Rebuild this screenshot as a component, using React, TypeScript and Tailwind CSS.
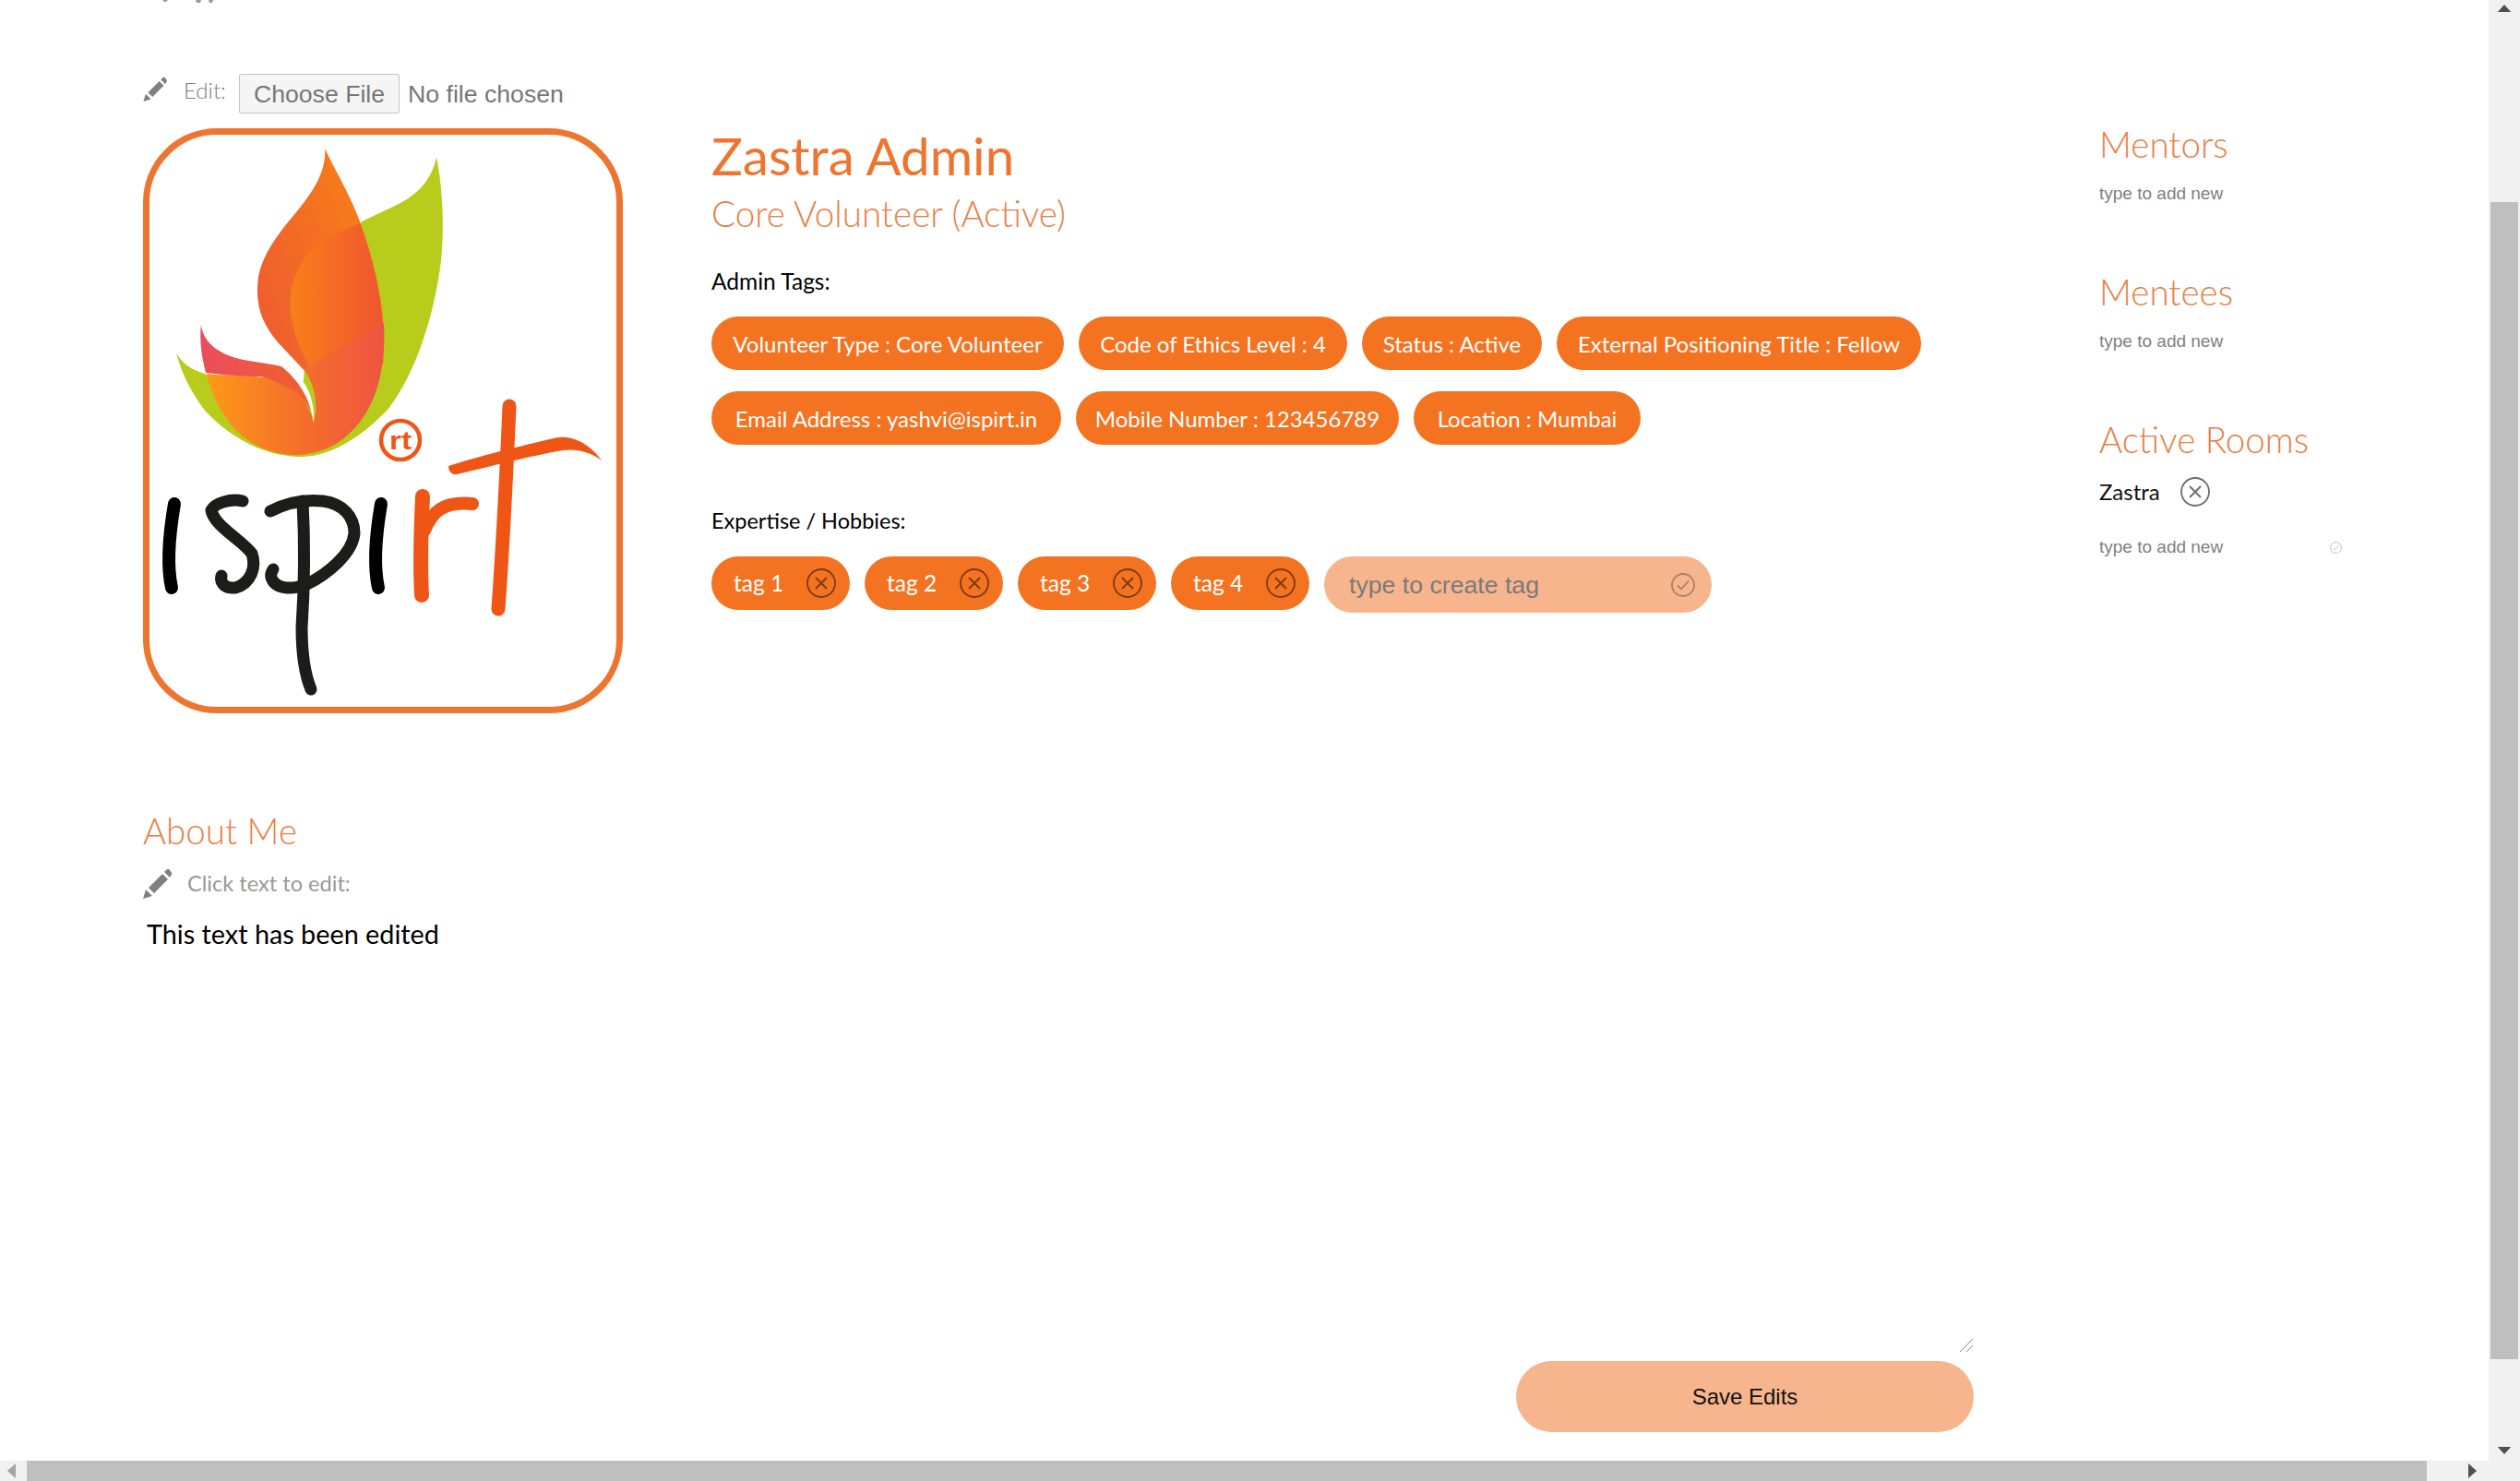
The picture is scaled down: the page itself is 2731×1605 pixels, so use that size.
const sans = "font-['Lato','Open_Sans',sans-serif]";

const adminTags = [
  [
    { label: "Volunteer Type : Core Volunteer", width: "w-[382px]" },
    { label: "Code of Ethics Level : 4", width: "w-[291px]" },
    { label: "Status : Active", width: "w-[195px]" },
    { label: "External Positioning Title : Fellow", width: "w-[395px]" },
  ],
  [
    { label: "Email Address : yashvi@ispirt.in", width: "w-[379px]" },
    { label: "Mobile Number : 123456789", width: "w-[350px]" },
    { label: "Location : Mumbai", width: "w-[246px]" },
  ],
];
const hobbyTags = ["tag 1", "tag 2", "tag 3", "tag 4"];

const PencilIcon = ({ className }: { className: string }) => (
  <svg viewBox="0 0 32 33" className={className} fill="#808080">
    <path d="M6 21 21 6l6 6-15 15Z" />
    <path d="M0 33l3-10 7 7Z" />
    <path d="M23 4l3-3q2-1 3 1l2 3q1 2-1 3l-1 2Z" />
  </svg>
);

const CircleCross = ({ className, color }: { className: string; color: string }) => (
  <svg viewBox="0 0 32 32" className={className} fill="none" stroke={color} strokeWidth="1.8">
    <circle cx="16" cy="16" r="15" />
    <path d="M10 10l12 12M22 10 10 22" />
  </svg>
);

const CircleTick = ({ className, color }: { className: string; color: string }) => (
  <svg viewBox="0 0 26 26" className={className} fill="none" stroke={color} strokeWidth="1.8">
    <circle cx="13" cy="13" r="12" />
    <path d="M7 13.5l4 4 8-9" />
  </svg>
);

const IspirtLogo = () => (
  <svg viewBox="155 139 520 634" className="h-[634px] w-[520px]">
    <defs>
      <linearGradient id="petal" x1="0" x2="0.8" y1="0.6" y2="0.1">
        <stop offset="0" stopColor="#ef5f2e" />
        <stop offset="1" stopColor="#f77e18" />
      </linearGradient>
      <linearGradient id="inner" x1="0" x2="1" y1="0" y2="0">
        <stop offset="0" stopColor="#f87f1a" />
        <stop offset="1" stopColor="#f05530" />
      </linearGradient>
      <linearGradient id="bowl" x1="0" x2="1" y1="0" y2="0">
        <stop offset="0" stopColor="#fd9a18" />
        <stop offset="0.5" stopColor="#f5702a" />
        <stop offset="1" stopColor="#ee5540" />
      </linearGradient>
      <linearGradient id="pink" x1="0" x2="1" y1="0" y2="0">
        <stop offset="0" stopColor="#ea4d5e" />
        <stop offset="1" stopColor="#f2602a" />
      </linearGradient>
    </defs>
    {/* green leaves */}
    <path d="M473 170C468 195 452 212 428 223L392 240 330 400 321 495C360 497 395 470 421 443 450 405 470 345 478 283 482 240 479 200 473 170Z" fill="#b8cc1c" />
    <path d="M191 382C196 392 205 400 222 405L340 470 321 495C285 493 250 475 222 445 205 422 196 402 191 382Z" fill="#b8cc1c" />
    {/* main flame */}
    <path d="M352 161C354 185 340 207 321 230 300 255 285 275 280 300 276 330 283 350 302 372L333 405 416 380C418 340 409 295 392 245 380 212 365 188 352 161Z" fill="url(#petal)" />
    <path d="M390 242C370 252 345 258 330 280 316 300 312 325 316 345 320 370 330 385 340 410L415 395C418 340 408 290 390 242Z" fill="url(#inner)" />
    <path d="M224 405C250 408 285 405 310 415 325 422 335 440 340 458 345 440 342 420 330 400L416 350C418 395 410 425 397 447 380 475 355 492 321 493 290 493 265 478 250 460 237 443 228 425 224 405Z" fill="url(#bowl)" />
    {/* pink petal */}
    <path d="M218 352C220 370 235 382 256 388 275 393 290 393 308 398 325 405 338 425 337 445 330 430 315 418 283 408 260 408 240 406 223 404 218 385 216 368 218 352Z" fill="url(#pink)" />
    <path d="M300 393C325 400 342 425 340 458 336 432 325 412 300 393Z" fill="#ffffff" />
    {/* wordmark strokes */}
    <g fill="none" stroke="#000000" strokeLinecap="round" strokeWidth="14">
      <path d="M189 546C184 575 180 610 186 637" />
      <path d="M413 546C408 575 404 610 410 637" />
    </g>
    <g fill="none" stroke="#1d1c1b" strokeLinecap="round" strokeLinejoin="round" strokeWidth="13">
      <path d="M263 543C250 540 233 545 229 553 232 570 262 585 273 600 278 615 272 632 255 637 244 638 238 632 240 624" />
      <path d="M293 554C310 545 330 541 350 543 372 546 384 560 384 578 382 600 355 622 333 633 315 640 298 638 294 626 293 622 294 620 296 617" />
      <path d="M328 543C331 600 329 650 327 680 327 705 330 730 337 747" />
    </g>
    <g fill="none" stroke="#ef5615" strokeLinecap="round" strokeLinejoin="round">
      <path d="M458 538C456 580 455 610 457 645" strokeWidth="16" />
      <path d="M460 575C468 555 480 543 512 546" strokeWidth="14" />
      <path d="M552 440C549 510 545 590 540 660" strokeWidth="15" />
    </g>
    <path d="M486 505C520 494 570 482 600 475 620 470 640 482 652 499 640 490 625 486 610 488 570 495 530 506 495 514 490 515 486 511 486 505Z" fill="#ef5615" />
    <circle cx="434" cy="477" r="21" fill="none" stroke="#ef5615" strokeWidth="4.5" />
    <text x="434" y="487" textAnchor="middle" fontFamily="'Liberation Sans',sans-serif" fontWeight="700" fontSize="27" fill="#ef5615" textLength="24" lengthAdjust="spacingAndGlyphs">rt</text>
  </svg>
);

const SideSection = ({ title }: { title: string }) => (
  <section className="mb-[70px]">
    <h3 className="text-[38.5px] leading-[48px] font-light text-[#e97e45]">{title}</h3>
    <p className="mt-[18px] text-[19px] leading-[24px] text-[#808080] font-['Liberation_Sans',sans-serif]">type to add new</p>
  </section>
);

export default function App() {
  return (
    <div className={`relative flex h-[1605px] w-[2731px] flex-col overflow-hidden bg-white ${sans}`}>
      {/* bottoms of a line cut off by the scroll position */}
      <svg viewBox="0 0 60 3" className="absolute left-[176px] top-0 h-[3px] w-[60px]" fill="#9a9a9a">
        <path d="M0 0h6l-2 2H2ZM36 0h6l-1 3h-4ZM50 0h5l-1 3h-3Z" />
      </svg>
      <div className="flex min-h-0 flex-1">
        <main className="relative flex min-w-0 flex-1 flex-col pb-[31px] pl-[155px] pt-[80px]">
          <div className="flex">
            <div className="w-[616px]">
              <div className="flex h-[43px] items-center">
                <PencilIcon className="h-[27px] w-[27px] -translate-y-[5px]" />
                <span className="ml-[17px] w-[44px] -translate-y-[4px] whitespace-nowrap text-[24px] font-light text-[#808080]">Edit:</span>
                <button className="ml-[16px] h-[43px] w-[174px] rounded-[2px] border border-[#c4c4c4] bg-[#f5f5f5] text-[26.67px] text-[#777777] font-['Liberation_Sans',sans-serif]">Choose File</button>
                <span className="ml-[9px] text-[26.67px] text-[#777777] font-['Liberation_Sans',sans-serif]">No file chosen</span>
              </div>
              <div className="relative mt-[16px] box-border h-[634px] w-[520px] overflow-hidden rounded-[80px] border-[7px] border-[#ee7530]">
                <div className="absolute left-[-7px] top-[-7px]">
                  <IspirtLogo />
                </div>
              </div>
            </div>

            <div className="w-[1504px] pt-[55px]">
              <h1 className="text-[56.5px] leading-[66px] text-[#ee7530]">Zastra Admin</h1>
              <h2 className="mt-[4px] text-[38.6px] leading-[52px] font-light text-[#e97e45]">Core Volunteer (Active)</h2>
              <p className="mt-[31px] text-[24.5px] leading-[34px] text-black">Admin Tags:</p>
              <div className="mt-[21px] flex flex-col gap-[23px]">
                {adminTags.map((row, i) => (
                  <div key={i} className="flex gap-[16px]">
                    {row.map((tag) => (
                      <span key={tag.label} className={`flex h-[58px] items-center justify-center whitespace-nowrap rounded-full bg-[#f47321] pt-[2px] text-[24px] text-white ${tag.width}`}>{tag.label}</span>
                    ))}
                  </div>
                ))}
              </div>
              <p className="mt-[65px] text-[23.5px] leading-[34px] text-black">Expertise / Hobbies:</p>
              <div className="mt-[22px] flex items-start gap-[16px]">
                {hobbyTags.map((tag) => (
                  <span key={tag} className="flex h-[58px] w-[150px] items-center justify-between rounded-full bg-[#f47321] pl-[24px] pr-[15px] text-[24.5px] text-white">
                    {tag}
                    <CircleCross className="h-[32px] w-[32px]" color="#7c3a12" />
                  </span>
                ))}
                <div className="flex h-[61px] w-[420px] items-center justify-between rounded-full bg-[#f7b58e] pl-[27px] pr-[18px] text-[26.67px] text-[#7a7a7a] font-['Liberation_Sans',sans-serif]">
                  type to create tag
                  <CircleTick className="h-[26px] w-[26px]" color="#a8826a" />
                </div>
              </div>
            </div>

            <aside className="w-[422px] pt-[52px]">
              <SideSection title="Mentors" />
              <SideSection title="Mentees" />
              <section>
                <h3 className="text-[38.5px] leading-[48px] font-light text-[#e97e45]">Active Rooms</h3>
                <div className="mt-[16px] flex items-center">
                  <span className="w-[63px] text-[24px] leading-[34px] text-[#111111]">Zastra</span>
                  <CircleCross className="ml-[25px] h-[32px] w-[32px]" color="#6b6b6b" />
                </div>
                <div className="mt-[31px] flex w-[263px] items-center justify-between">
                  <span className="text-[19px] leading-[24px] text-[#808080] font-['Liberation_Sans',sans-serif]">type to add new</span>
                  <CircleTick className="h-[13px] w-[13px]" color="#b5b5b5" />
                </div>
              </section>
            </aside>
          </div>

          <div className="relative flex min-h-0 w-[1984px] flex-1 flex-col">
            <h3 className="mt-[103px] text-[38.5px] leading-[48px] font-light text-[#e97e45]">About Me</h3>
            <div className="mt-[16px] flex items-center">
              <PencilIcon className="h-[33px] w-[32px]" />
              <span className="ml-[16px] text-[23.6px] text-[#999999]">Click text to edit:</span>
            </div>
            <p className="ml-[4px] mt-[17px] text-[28.8px] leading-[40px] text-black">This text has been edited</p>
            <svg viewBox="0 0 16 16" className="absolute bottom-[86px] right-0 h-[16px] w-[16px]" stroke="#8a8a8a" strokeWidth="1">
              <path d="M1 15 15 1M8 15l7-7" />
            </svg>
            <button className="mt-auto h-[77px] w-[496px] self-end rounded-full bg-[#f7b58e] text-[24px] text-[#111111] font-['Liberation_Sans',sans-serif]">Save Edits</button>
          </div>
        </main>

        {/* vertical scrollbar */}
        <div className="flex w-[34px] flex-col items-center bg-[#f1f1f1]">
          <svg viewBox="0 0 16 10" className="mt-[5px] h-[9px] w-[16px]" fill="#505050"><path d="M8 0l8 9H0Z" /></svg>
          <div className="mt-[205px] h-[1254px] w-[30px] bg-[#bfbfbf]" />
          <svg viewBox="0 0 16 10" className="mt-auto mb-[6px] h-[9px] w-[16px]" fill="#505050"><path d="M8 9 0 0h16Z" /></svg>
        </div>
      </div>

      {/* horizontal scrollbar */}
      <div className="flex h-[22px] items-center bg-[#f1f1f1]">
        <svg viewBox="0 0 9 16" className="ml-[8px] h-[16px] w-[9px]" fill="#a3a3a3"><path d="M0 8l9-8v16Z" /></svg>
        <div className="ml-[12px] h-full w-[2601px] bg-[#bfbfbf]" />
        <svg viewBox="0 0 9 16" className="ml-[45px] h-[16px] w-[9px]" fill="#505050"><path d="M9 8 0 0v16Z" /></svg>
      </div>
    </div>
  );
}
